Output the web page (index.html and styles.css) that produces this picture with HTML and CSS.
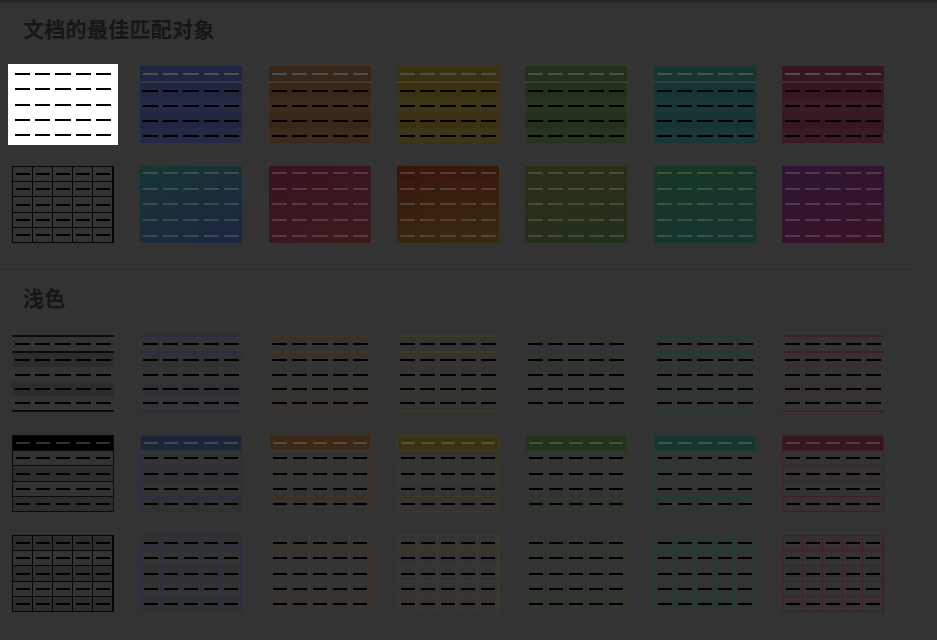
FILE: index.html
```html
<!DOCTYPE html>
<html lang="zh-CN">
<head>
<meta charset="utf-8">
<title>表格样式</title>
<link rel="stylesheet" href="styles.css">
</head>
<body>
<div class="panel">
  <section class="group first">
    <h2 class="title">文档的最佳匹配对象</h2>
    <div class="gallery">
      <div class="item selected"><div class="thumb plain"><span class="r"></span><span class="r"></span><span class="r"></span><span class="r"></span><span class="r"></span></div></div>
      <div class="item"><div class="thumb med c2"><span class="r"></span><span class="r"></span><span class="r"></span><span class="r"></span><span class="r"></span></div></div>
      <div class="item"><div class="thumb med c3"><span class="r"></span><span class="r"></span><span class="r"></span><span class="r"></span><span class="r"></span></div></div>
      <div class="item"><div class="thumb med c4"><span class="r"></span><span class="r"></span><span class="r"></span><span class="r"></span><span class="r"></span></div></div>
      <div class="item"><div class="thumb med c5"><span class="r"></span><span class="r"></span><span class="r"></span><span class="r"></span><span class="r"></span></div></div>
      <div class="item"><div class="thumb med c6"><span class="r"></span><span class="r"></span><span class="r"></span><span class="r"></span><span class="r"></span></div></div>
      <div class="item"><div class="thumb med c7"><span class="r"></span><span class="r"></span><span class="r"></span><span class="r"></span><span class="r"></span></div></div>

      <div class="item"><div class="thumb grd c1 nob"><span class="r"></span><span class="r"></span><span class="r"></span><span class="r"></span><span class="r"></span></div></div>
      <div class="item"><div class="thumb grad g2"><span class="r"></span><span class="r"></span><span class="r"></span><span class="r"></span><span class="r"></span></div></div>
      <div class="item"><div class="thumb grad g3"><span class="r"></span><span class="r"></span><span class="r"></span><span class="r"></span><span class="r"></span></div></div>
      <div class="item"><div class="thumb grad g4"><span class="r"></span><span class="r"></span><span class="r"></span><span class="r"></span><span class="r"></span></div></div>
      <div class="item"><div class="thumb grad g5"><span class="r"></span><span class="r"></span><span class="r"></span><span class="r"></span><span class="r"></span></div></div>
      <div class="item"><div class="thumb grad g6"><span class="r"></span><span class="r"></span><span class="r"></span><span class="r"></span><span class="r"></span></div></div>
      <div class="item"><div class="thumb grad g7"><span class="r"></span><span class="r"></span><span class="r"></span><span class="r"></span><span class="r"></span></div></div>
    </div>
  </section>

  <hr class="sep">

  <section class="group">
    <h2 class="title">浅色</h2>
    <div class="gallery">
      <div class="item"><div class="thumb lt c1"><span class="r"></span><span class="r"></span><span class="r"></span><span class="r"></span><span class="r"></span></div></div>
      <div class="item"><div class="thumb lt c2"><span class="r"></span><span class="r"></span><span class="r"></span><span class="r"></span><span class="r"></span></div></div>
      <div class="item"><div class="thumb lt c3"><span class="r"></span><span class="r"></span><span class="r"></span><span class="r"></span><span class="r"></span></div></div>
      <div class="item"><div class="thumb lt c4"><span class="r"></span><span class="r"></span><span class="r"></span><span class="r"></span><span class="r"></span></div></div>
      <div class="item"><div class="thumb lt c5"><span class="r"></span><span class="r"></span><span class="r"></span><span class="r"></span><span class="r"></span></div></div>
      <div class="item"><div class="thumb lt c6"><span class="r"></span><span class="r"></span><span class="r"></span><span class="r"></span><span class="r"></span></div></div>
      <div class="item"><div class="thumb lt c7"><span class="r"></span><span class="r"></span><span class="r"></span><span class="r"></span><span class="r"></span></div></div>

      <div class="item"><div class="thumb hdr c1"><span class="r"></span><span class="r"></span><span class="r"></span><span class="r"></span><span class="r"></span></div></div>
      <div class="item"><div class="thumb hdr c2"><span class="r"></span><span class="r"></span><span class="r"></span><span class="r"></span><span class="r"></span></div></div>
      <div class="item"><div class="thumb hdr c3"><span class="r"></span><span class="r"></span><span class="r"></span><span class="r"></span><span class="r"></span></div></div>
      <div class="item"><div class="thumb hdr c4"><span class="r"></span><span class="r"></span><span class="r"></span><span class="r"></span><span class="r"></span></div></div>
      <div class="item"><div class="thumb hdr c5"><span class="r"></span><span class="r"></span><span class="r"></span><span class="r"></span><span class="r"></span></div></div>
      <div class="item"><div class="thumb hdr c6"><span class="r"></span><span class="r"></span><span class="r"></span><span class="r"></span><span class="r"></span></div></div>
      <div class="item"><div class="thumb hdr c7"><span class="r"></span><span class="r"></span><span class="r"></span><span class="r"></span><span class="r"></span></div></div>

      <div class="item"><div class="thumb grd c1"><span class="r"></span><span class="r"></span><span class="r"></span><span class="r"></span><span class="r"></span></div></div>
      <div class="item"><div class="thumb grd c2"><span class="r"></span><span class="r"></span><span class="r"></span><span class="r"></span><span class="r"></span></div></div>
      <div class="item"><div class="thumb grd c3"><span class="r"></span><span class="r"></span><span class="r"></span><span class="r"></span><span class="r"></span></div></div>
      <div class="item"><div class="thumb grd c4"><span class="r"></span><span class="r"></span><span class="r"></span><span class="r"></span><span class="r"></span></div></div>
      <div class="item"><div class="thumb grd c5"><span class="r"></span><span class="r"></span><span class="r"></span><span class="r"></span><span class="r"></span></div></div>
      <div class="item"><div class="thumb grd c6"><span class="r"></span><span class="r"></span><span class="r"></span><span class="r"></span><span class="r"></span></div></div>
      <div class="item"><div class="thumb grd c7"><span class="r"></span><span class="r"></span><span class="r"></span><span class="r"></span><span class="r"></span></div></div>
    </div>
  </section>
</div>
</body>
</html>
```

FILE: styles.css
```css
html, body {
  margin: 0;
  padding: 0;
  height: 100%;
  overflow: hidden;
}

body {
  background: #333333 linear-gradient(#232323, #333333 5px) no-repeat;
  font-family: "Noto Sans CJK SC", "Noto Sans", sans-serif;
}

.panel {
  width: 937px;
}

.group.first {
  padding-top: 14px;
}

.title {
  margin: 0;
  padding-left: 23px;
  font-size: 21px;
  line-height: 28px;
  font-weight: 700;
  letter-spacing: 0.3px;
  color: #161616;
}

.gallery {
  display: grid;
  grid-template-columns: repeat(7, 110px);
  column-gap: 18.33px;
  row-gap: 19px;
  padding-left: 8px;
  margin-top: 22px;
}

.item {
  width: 110px;
  height: 81px;
  box-sizing: border-box;
  padding: 2px 4px;
}

.item.selected {
  background: #ffffff;
}

.sep {
  margin: 24px 0 13px 0;
  width: 915px;
  height: 0;
  border: 0;
  border-top: 1px solid #2b2b2b;
}

/* ---------- thumbnail base ---------- */
.thumb {
  --d: #000000;
  --ln: #0a0a0a;
  --band: rgba(0, 0, 0, 0.1);
  --vl: none;
  width: 102px;
  height: 77px;
  box-sizing: border-box;
  display: flex;
  flex-direction: column;
}

.r {
  display: block;
  flex: 1 1 0;
  min-height: 0;
  background-image:
    repeating-linear-gradient(90deg, transparent 0 2.6%, var(--d) 2.6% 17.4%, transparent 17.4% 20%),
    var(--vl);
  background-size: 100% 2px, 100% 100%;
  background-position: 0 50%, 0 0;
  background-repeat: no-repeat;
}

/* colour families (already dimmed) */
.c1 { --ln: #0c0c0c; --fill: #2a2a2a; --hf: #000000; --band: rgba(0, 0, 0, 0.12); }
.c2 { --ln: #292d40; --fill: #1f2640; --hf: #1d2438; --band: rgba(30, 40, 70, 0.12); }
.c3 { --ln: #423224; --fill: #382719; --hf: #3c2816; --band: rgba(80, 55, 30, 0.1); }
.c4 { --ln: #423a20; --fill: #3a3113; --hf: #3b3212; --band: rgba(80, 70, 25, 0.1); }
.c5 { --ln: #2a3826; --fill: #22301c; --hf: #21331b; --band: rgba(40, 70, 35, 0.1); }
.c6 { --ln: #1e3c37; --fill: #163431; --hf: #153630; --band: rgba(25, 70, 62, 0.1); }
.c7 { --ln: #421f28; --fill: #36171f; --hf: #38141c; --band: rgba(80, 30, 42, 0.1); }

/* plain: no borders */
.plain {
  background: #ffffff;
}

/* medium: solid fill, light header */
.med {
  background: var(--fill);
}
.med .r:first-child {
  --d: #4e4e4e;
  border-bottom: 2px solid rgba(255, 255, 255, 0.08);
}
.med .r:nth-child(odd):not(:first-child) {
  background-color: rgba(255, 255, 255, 0.02);
}

/* gradient: all light dashes */
.grad {
  --d: rgba(130, 130, 130, 0.34);
}
.grad .r + .r {
  border-top: 1px solid rgba(255, 255, 255, 0.025);
}
.g2 { background: linear-gradient(160deg, #153633, #1d2440); }
.g3 { background: linear-gradient(160deg, #381220, #3c1b1c); }
.g4 { background: linear-gradient(170deg, #38150b, #382a10); }
.g5 { background: linear-gradient(170deg, #2d2d17, #212f1c); }
.g6 { background: linear-gradient(170deg, #173722, #153431); }
.g7 { background: linear-gradient(160deg, #2f1534, #381325); }

/* light: top/bottom rules, banded rows */
.lt {
  border-top: 2px solid var(--ln);
  border-bottom: 2px solid var(--ln);
}
.lt .r:first-child {
  border-bottom: 2px solid var(--ln);
}
.lt .r:nth-child(even) {
  background-color: var(--band);
}

/* header: filled header, row rules, outer border */
.hdr {
  border: 1px solid var(--ln);
}
.hdr .r:first-child {
  --d: rgba(130, 130, 130, 0.36);
  background-color: var(--hf);
}
.hdr .r + .r {
  border-top: 1px solid var(--ln);
}
.hdr .r:nth-child(odd):not(:first-child) {
  background-color: var(--band);
}

/* grid: every cell ruled */
.grd {
  --vl: repeating-linear-gradient(90deg, transparent 0 calc(20% - 1px), var(--ln) calc(20% - 1px) 20%);
  border: 1px solid var(--ln);
}
.grd .r + .r {
  border-top: 1px solid var(--ln);
}
.grd .r:nth-child(odd) {
  background-color: var(--band);
}
.grd.nob .r:nth-child(odd) {
  background-color: transparent;
}
.grd.c1 {
  --ln: #050505;
  border-width: 1.5px;
}
.grd.c1 .r + .r {
  border-top-width: 1.5px;
}
```
